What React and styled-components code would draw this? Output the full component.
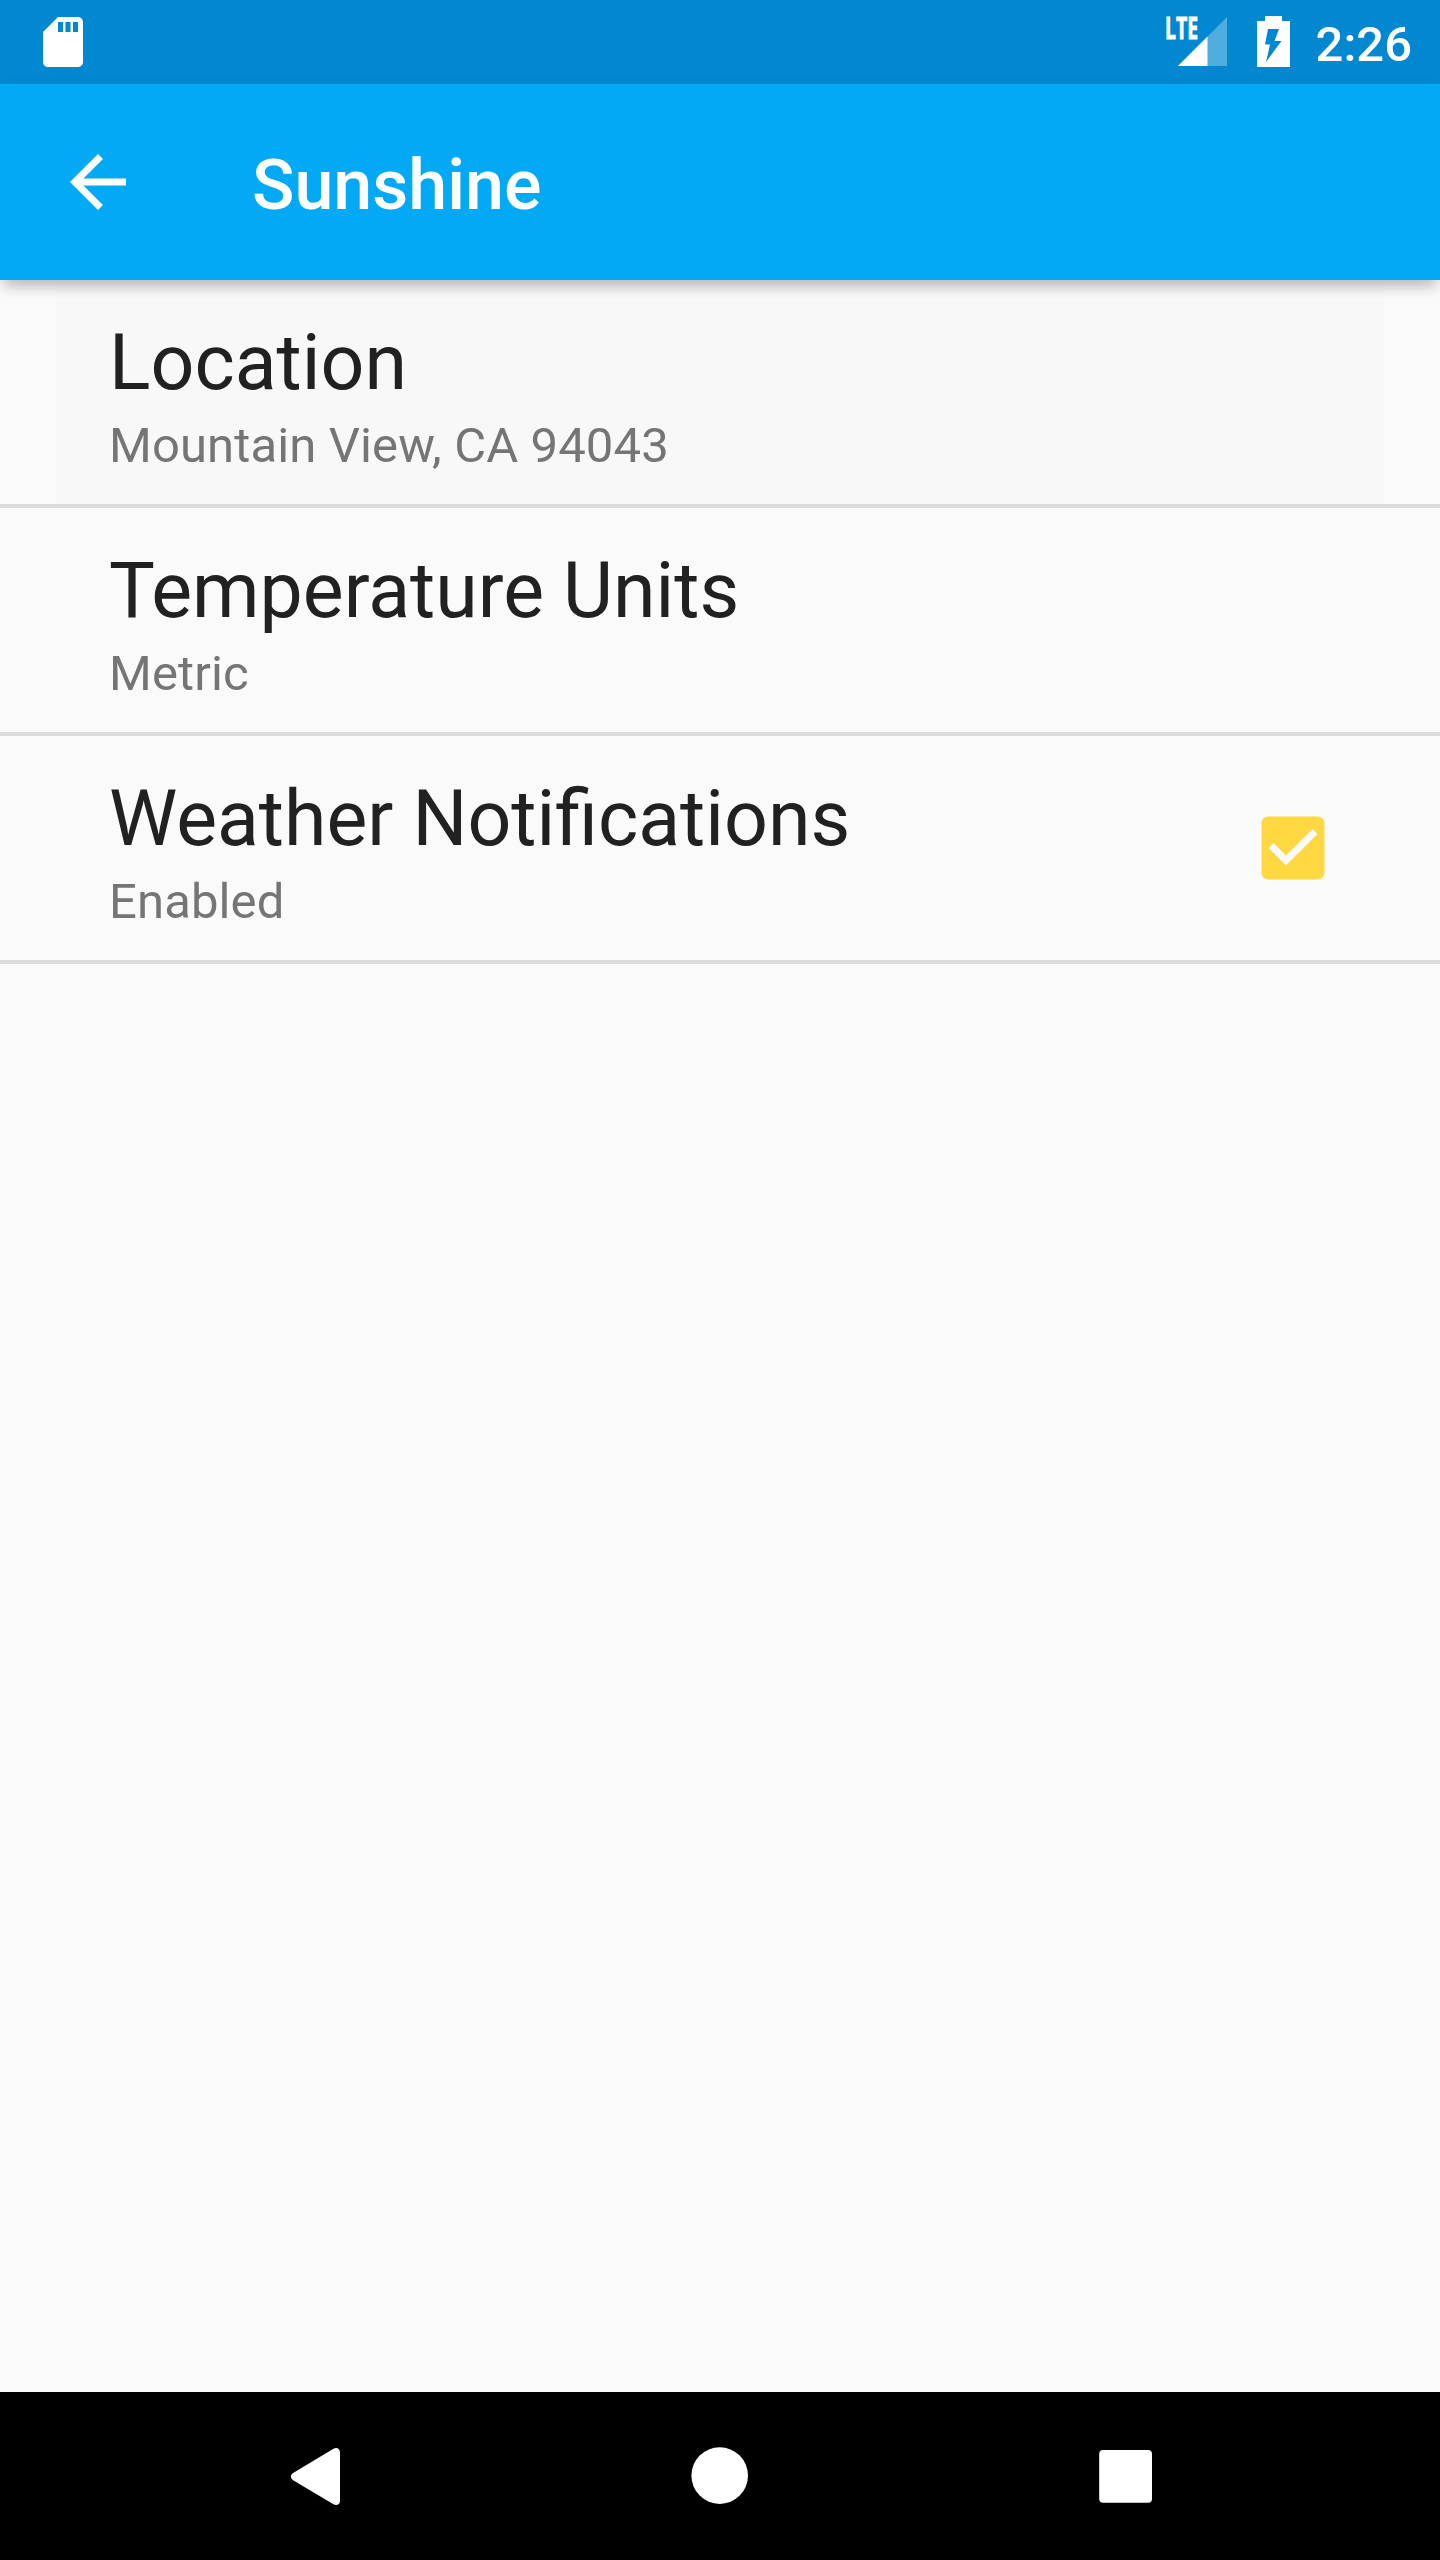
import React from "react";
import styled, { createGlobalStyle } from "styled-components";

const GlobalStyle = createGlobalStyle`
  * { box-sizing: border-box; }
  html, body { margin: 0; padding: 0; background: #fafafa; }
  body { font-family: Roboto, "Liberation Sans", sans-serif; }
`;

const Screen = styled.div`
  width: 1440px;
  height: 2560px;
  display: flex;
  flex-direction: column;
  overflow: hidden;
  background: #fafafa;
`;

const StatusBar = styled.header`
  flex: 0 0 84px;
  display: flex;
  justify-content: space-between;
  padding: 0 28px 0 33px;
  background: #0288d1;
  color: #fff;
`;

const StatusGroup = styled.div`
  display: flex;
  align-items: center;
`;

const Clock = styled.time`
  margin-left: 26px;
  padding-top: 5px;
  font-size: 49px;
  line-height: 58px;
  font-weight: 500;
`;

const Glyph = styled.svg`
  display: block;
  flex: none;
  width: ${(p) => p.$w}px;
  height: ${(p) => p.$h}px;
  margin-left: ${(p) => p.$gap || 0}px;
  fill: ${(p) => p.$color || "#fff"};
`;

const NetworkLabel = styled.text`
  font-family: "Open Sans", "Noto Sans", sans-serif;
  font-size: 29.5px;
  font-weight: 700;
  stroke: #fff;
  stroke-width: 0.9px;
`;

const Toolbar = styled.div`
  flex: 0 0 196px;
  display: flex;
  align-items: center;
  padding: 0 56px;
  background: #03a9f4;
  position: relative;
  z-index: 1;
  box-shadow: 0 11px 13px -5px rgba(0, 0, 0, 0.22), 0 5px 16px rgba(0, 0, 0, 0.07);
`;

const BackButton = styled.button`
  border: 0;
  padding: 0;
  background: none;
`;

const Title = styled.h1`
  margin: 6px 0 0 112px;
  color: #fff;
  font-size: 70px;
  line-height: 82px;
  font-weight: 500;
`;

const List = styled.main`
  flex: 1;
`;

const Row = styled.section`
  height: 228px;
  padding: 0 56px;
  border-bottom: 4px solid #dcdcdc;
`;

const RowBody = styled.div`
  height: 100%;
  display: flex;
  align-items: center;
  justify-content: space-between;
  padding: 0 49px 0 53px;
  background: ${(p) => (p.$active ? "#f8f8f8" : "transparent")};
`;

const RowText = styled.div`
  padding-top: 8px;
`;

const RowTitle = styled.h2`
  margin: 0;
  color: #212121;
  font-size: 77px;
  line-height: 90px;
  font-weight: 400;
`;

const RowSummary = styled.p`
  margin: 9px 0 0;
  color: #757575;
  font-size: 49px;
  line-height: 58px;
  letter-spacing: 0.12px;
`;

const NavBar = styled.nav`
  flex: 0 0 168px;
  display: flex;
  justify-content: center;
  background: #000;
`;

const NavButton = styled.button`
  width: 406px;
  height: 168px;
  display: flex;
  align-items: center;
  justify-content: center;
  border: 0;
  padding: 0;
  background: none;
`;

const SdCard = () => (
  <Glyph $w={60} $h={60} viewBox="0 0 24 24">
    <path d="M18 2h-8L4.02 8 4 20c0 1.1.9 2 2 2h12c1.1 0 2-.9 2-2V4c0-1.1-.9-2-2-2zm-6 6h-2V4h2v4zm3 0h-2V4h2v4zm3 0h-2V4h2v4z" />
  </Glyph>
);

const Signal = () => (
  <Glyph $w={62} $h={84} viewBox="0 0 62 84">
    <path d="M62 17V66H13Z" opacity="0.3" />
    <path d="M42.5 36.5V66H13Z" />
    <NetworkLabel x="0" y="39" textLength="33" lengthAdjust="spacingAndGlyphs">LTE</NetworkLabel>
  </Glyph>
);

const Battery = () => (
  <Glyph $w={33} $h={84} $gap={30} viewBox="0 0 33 84">
    <path
      fillRule="evenodd"
      d="M8 16H25V21H33V67H0V21H8Z M11 29H22L17.500 41H24.500L9 62L13 44.500H8Z"
    />
  </Glyph>
);

const Checkbox = () => (
  <Glyph $w={84} $h={84} $color="#ffd740" viewBox="0 0 24 24" role="checkbox" aria-checked="true">
    <path d="M19 3H5c-1.11 0-2 .9-2 2v14c0 1.1.89 2 2 2h14c1.11 0 2-.9 2-2V5c0-1.1-.89-2-2-2zm-9 14l-5-5 1.41-1.41L10 14.17l7.59-7.59L19 8l-9 9z" />
  </Glyph>
);

const preferences = [
  { title: "Location", summary: "Mountain View, CA 94043", active: true },
  { title: "Temperature Units", summary: "Metric" },
  { title: "Weather Notifications", summary: "Enabled", checked: true },
];

export default function App() {
  return (
    <>
      <GlobalStyle />
      <Screen>
        <StatusBar>
          <StatusGroup>
            <SdCard />
          </StatusGroup>
          <StatusGroup>
            <Signal />
            <Battery />
            <Clock>2:26</Clock>
          </StatusGroup>
        </StatusBar>
        <Toolbar>
          <BackButton aria-label="Back">
            <Glyph $w={84} $h={84} viewBox="0 0 24 24">
              <path d="M20 11H7.83l5.59-5.59L12 4l-8 8 8 8 1.41-1.41L7.83 13H20v-2z" />
            </Glyph>
          </BackButton>
          <Title>Sunshine</Title>
        </Toolbar>
        <List>
          {preferences.map((item) => (
            <Row key={item.title}>
              <RowBody $active={item.active}>
                <RowText>
                  <RowTitle>{item.title}</RowTitle>
                  <RowSummary>{item.summary}</RowSummary>
                </RowText>
                {item.checked && <Checkbox />}
              </RowBody>
            </Row>
          ))}
        </List>
        <NavBar>
          <NavButton aria-label="Back">
            <Glyph $w={84} $h={168} viewBox="0 0 84 168">
              <path d="M61.500 56.800C64.500 55 68 56.500 68 60.500V109C68 112.500 64.500 114 61.500 112.300L21.500 88.500C18 86.200 18 82.800 21.500 80.800Z" />
            </Glyph>
          </NavButton>
          <NavButton aria-label="Home">
            <Glyph $w={84} $h={168} viewBox="0 0 84 168">
              <circle cx="41.7" cy="83.6" r="28.3" />
            </Glyph>
          </NavButton>
          <NavButton aria-label="Overview">
            <Glyph $w={84} $h={168} viewBox="0 0 84 168">
              <rect x="15.2" y="58" width="52.8" height="52.8" rx="4" />
            </Glyph>
          </NavButton>
        </NavBar>
      </Screen>
    </>
  );
}
